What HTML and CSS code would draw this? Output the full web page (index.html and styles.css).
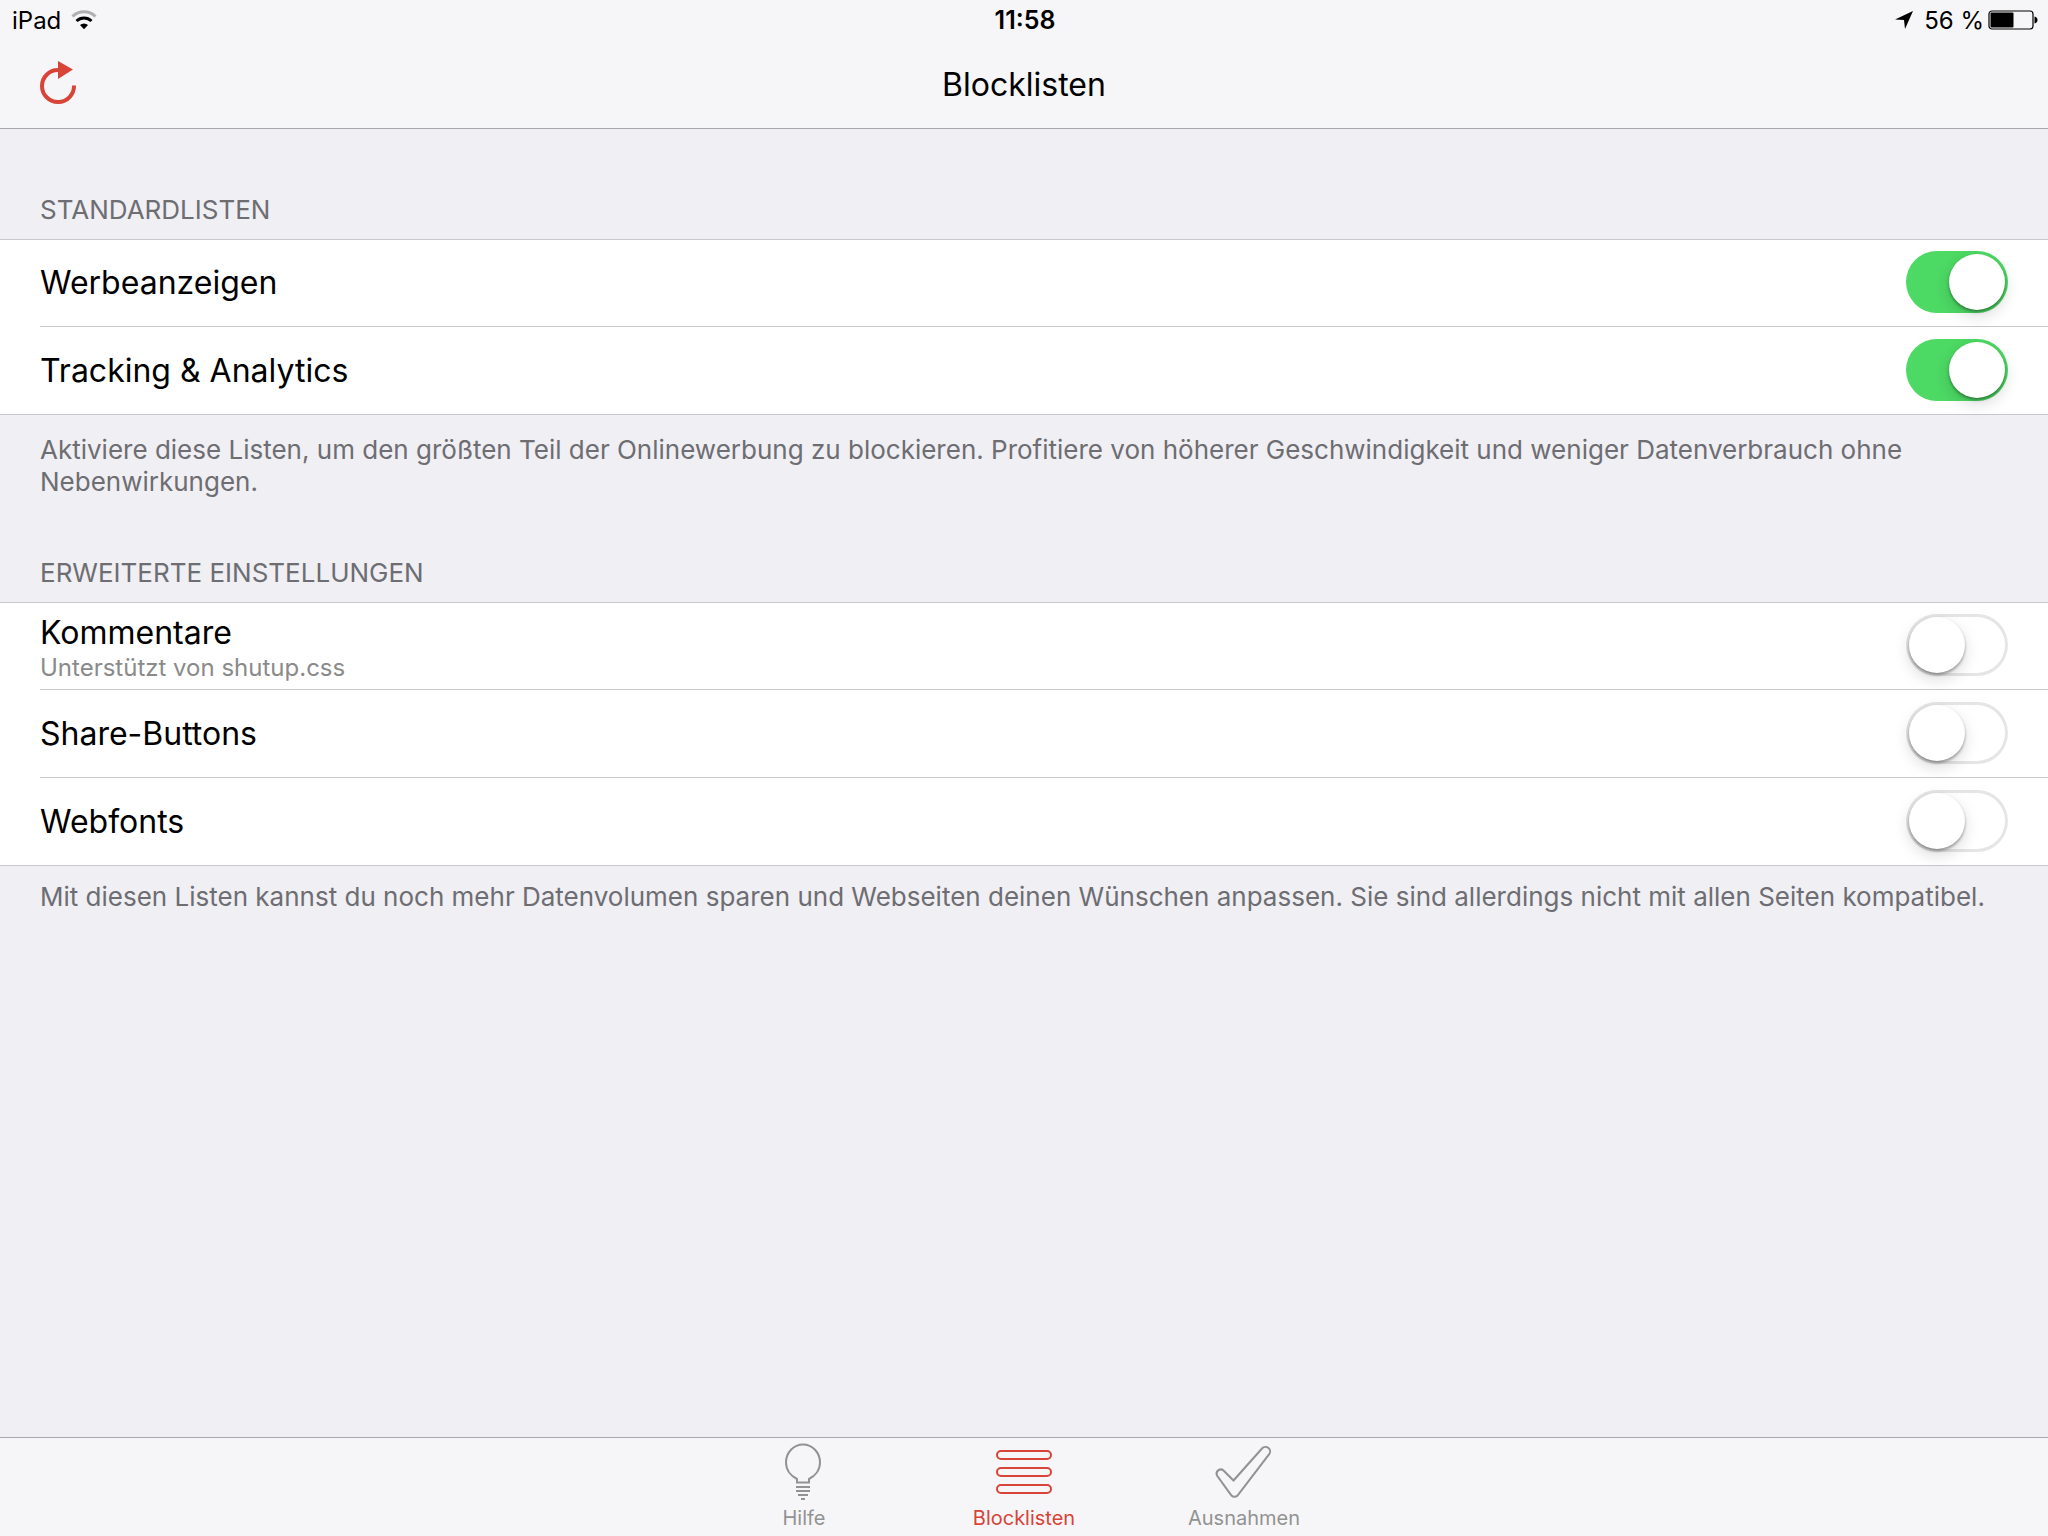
FILE: index.html
```html
<!DOCTYPE html>
<html lang="de">
<head>
  <meta charset="utf-8">
  <title>Blocklisten</title>
  <link rel="stylesheet" href="styles.css">
</head>
<body>
  <header class="header">
    <div class="status-bar">
      <div class="status-left">
        <span>iPad</span>
        <svg class="wifi" width="26" height="20" viewBox="0 0 26 20" fill="none">
          <path d="M1.500 6.500a16.500 16.500 0 0 1 23 0" stroke="#b0b0b2" stroke-width="3"/>
          <path d="M5.500 11a10.800 10.800 0 0 1 15 0" stroke="#000" stroke-width="3"/>
          <path d="M13 19.200L9 15a5.800 5.800 0 0 1 8 0z" fill="#000"/>
        </svg>
      </div>
      <time class="clock">11:58</time>
      <div class="status-right">
        <svg class="location" width="20" height="20" viewBox="0 0 20 20">
          <path d="M19 1L11 19L10 10L1 9.500z"/>
        </svg>
        <span>56 %</span>
        <svg class="battery" width="50" height="20" viewBox="0 0 50 20">
          <rect x="1" y="1" width="44" height="18" rx="3" fill="none" stroke="#000" stroke-width="1.200"/>
          <rect x="2.500" y="2.500" width="23" height="15" rx="1"/>
          <path d="M46.500 6.500q3 .6 3 3.500t-3 3.500z"/>
        </svg>
      </div>
    </div>
    <div class="nav-bar">
      <button class="refresh" type="button" aria-label="Aktualisieren">
        <svg width="38" height="44" viewBox="0 0 38 44">
          <path d="M34 24.500a16 16 0 1 1-16-15.500" fill="none" stroke="#d84437" stroke-width="4"/>
          <path d="M18 0l15 8.500L18 18z" fill="#d84437"/>
        </svg>
      </button>
      <h1 class="title">Blocklisten</h1>
    </div>
  </header>

  <main class="content">
    <section class="group">
      <h2 class="group-title">STANDARDLISTEN</h2>
      <ul class="list">
        <li class="row">
          <label class="row-inner">
            <span class="row-label">Werbeanzeigen</span>
            <input class="switch" type="checkbox" checked>
          </label>
        </li>
        <li class="row">
          <label class="row-inner">
            <span class="row-label">Tracking &amp; Analytics</span>
            <input class="switch" type="checkbox" checked>
          </label>
        </li>
      </ul>
      <p class="group-note">Aktiviere diese Listen, um den größten Teil der Onlinewerbung zu blockieren. Profitiere von höherer Geschwindigkeit und weniger Datenverbrauch ohne Nebenwirkungen.</p>
    </section>

    <section class="group">
      <h2 class="group-title">ERWEITERTE EINSTELLUNGEN</h2>
      <ul class="list">
        <li class="row">
          <label class="row-inner">
            <span class="row-text">
              <span class="row-label">Kommentare</span>
              <span class="row-detail">Unterstützt von shutup.css</span>
            </span>
            <input class="switch" type="checkbox">
          </label>
        </li>
        <li class="row">
          <label class="row-inner">
            <span class="row-label">Share-Buttons</span>
            <input class="switch" type="checkbox">
          </label>
        </li>
        <li class="row">
          <label class="row-inner">
            <span class="row-label">Webfonts</span>
            <input class="switch" type="checkbox">
          </label>
        </li>
      </ul>
      <p class="group-note">Mit diesen Listen kannst du noch mehr Datenvolumen sparen und Webseiten deinen Wünschen anpassen. Sie sind allerdings nicht mit allen Seiten kompatibel.</p>
    </section>
  </main>

  <nav class="tab-bar">
    <a class="tab" href="#hilfe">
      <svg width="60" height="60" viewBox="0 0 60 60" fill="none" stroke="currentColor" stroke-width="2">
        <path d="M23 44.500V41C17 38 12 32 12 24.500a17 18 0 0 1 34 0C46 32 41 38 35 41v3.500z"/>
        <path d="M22 49h14M22 53h14M24 57h10M27 61h4"/>
      </svg>
      <span>Hilfe</span>
    </a>
    <a class="tab active" href="#blocklisten">
      <svg width="60" height="60" viewBox="0 0 60 60" fill="none" stroke="currentColor" stroke-width="2">
        <rect x="3" y="13" width="54" height="8" rx="4"/>
        <rect x="3" y="30" width="54" height="8" rx="4"/>
        <rect x="3" y="47" width="54" height="8" rx="4"/>
      </svg>
      <span>Blocklisten</span>
    </a>
    <a class="tab" href="#ausnahmen">
      <svg width="60" height="60" viewBox="0 0 60 60" fill="none" stroke="currentColor" stroke-width="2">
        <path d="M19.500 42.500L48 10.500a4.500 4.500 0 0 1 7 6L23.500 57.500a4 4 0 0 1-6 0L3 37.500a4.200 4.200 0 0 1 6.500-5z"/>
      </svg>
      <span>Ausnahmen</span>
    </a>
  </nav>
</body>
</html>
```
FILE: styles.css
```css
* {
  box-sizing: border-box;
}

body {
  display: flex;
  flex-direction: column;
  min-height: 100vh;
  margin: 0;
  font-family: Inter, sans-serif;
  color: #000000;
  background: #EFEFF4;
}

.header {
  background: #F6F6F8;
  border-bottom: 1px solid #A8A8AC;
}

.status-bar {
  display: grid;
  grid-template-columns: 1fr auto 1fr;
  align-items: center;
  height: 40px;
  padding: 0 10px 0 12px;
  font-size: 24px;
}

.status-left,
.status-right {
  display: flex;
  align-items: center;
}

.status-left {
  gap: 10px;
}

.status-right {
  justify-content: flex-end;
}

.location {
  margin-right: 10px;
}

.battery {
  margin-left: 4px;
}

.clock {
  font-size: 25px;
  font-weight: 600;
}

.nav-bar {
  display: grid;
  grid-template-columns: 1fr auto 1fr;
  align-items: center;
  height: 88px;
  padding: 0 40px;
}

.refresh {
  justify-self: start;
  padding: 0 0 2px;
  border: none;
  background: none;
  cursor: pointer;
}

.refresh svg {
  display: block;
}

.title {
  margin: 0;
  font-size: 32px;
  font-weight: 400;
}

.content {
  flex: 1;
  padding-top: 65px;
}

.group {
  margin-bottom: 59px;
}

.group-title {
  margin: 0;
  padding: 0 40px 13px;
  font-size: 26px;
  font-weight: 400;
  line-height: 32px;
  color: #6D6D72;
}

.list {
  margin: 0;
  padding: 0;
  list-style: none;
  background: #FFFFFF;
  border-top: 1px solid #C8C7CC;
  border-bottom: 1px solid #C8C7CC;
}

.row {
  padding-left: 40px;
}

.row-inner {
  display: flex;
  align-items: center;
  justify-content: space-between;
  height: 88px;
  padding-right: 40px;
  border-bottom: 1px solid #C8C7CC;
  cursor: pointer;
}

.row:first-child .row-inner {
  height: 87px;
}

.row:last-child .row-inner {
  height: 87px;
  border-bottom: none;
}

.row-text {
  display: flex;
  flex-direction: column;
  padding-top: 4px;
}

.row-label {
  font-size: 32px;
  line-height: 40px;
}

.row-detail {
  font-size: 24px;
  line-height: 30px;
  color: #8A8A8A;
}

.switch {
  appearance: none;
  width: 102px;
  height: 62px;
  margin: 0 0 2px;
  padding: 3px;
  border-radius: 31px;
  background: #FFFFFF;
  box-shadow: inset 0 0 0 3px #E5E5E5;
  cursor: pointer;
}

.switch::before {
  content: "";
  display: block;
  width: 56px;
  height: 56px;
  border-radius: 50%;
  background: #FFFFFF;
  box-shadow: 0 6px 16px rgba(0, 0, 0, 0.15), 0 2px 3px rgba(0, 0, 0, 0.35);
}

.switch:checked {
  background: #4CD964;
  box-shadow: none;
}

.switch:checked::before {
  margin-left: 40px;
}

.group-note {
  margin: 0;
  padding: 19px 40px 0;
  font-size: 26px;
  line-height: 32px;
  color: #6D6D72;
}

.group:last-child .group-note {
  padding-top: 15px;
}

.tab-bar {
  display: flex;
  justify-content: center;
  gap: 68px;
  height: 99px;
  background: #F6F6F8;
  border-top: 1px solid #A8A8AC;
}

.tab {
  display: flex;
  flex-direction: column;
  align-items: center;
  width: 152px;
  font-size: 20px;
  line-height: 24px;
  color: #929292;
  text-decoration: none;
}

.tab svg {
  margin-bottom: 8px;
  overflow: visible;
}

.tab.active {
  color: #D84437;
}
```
